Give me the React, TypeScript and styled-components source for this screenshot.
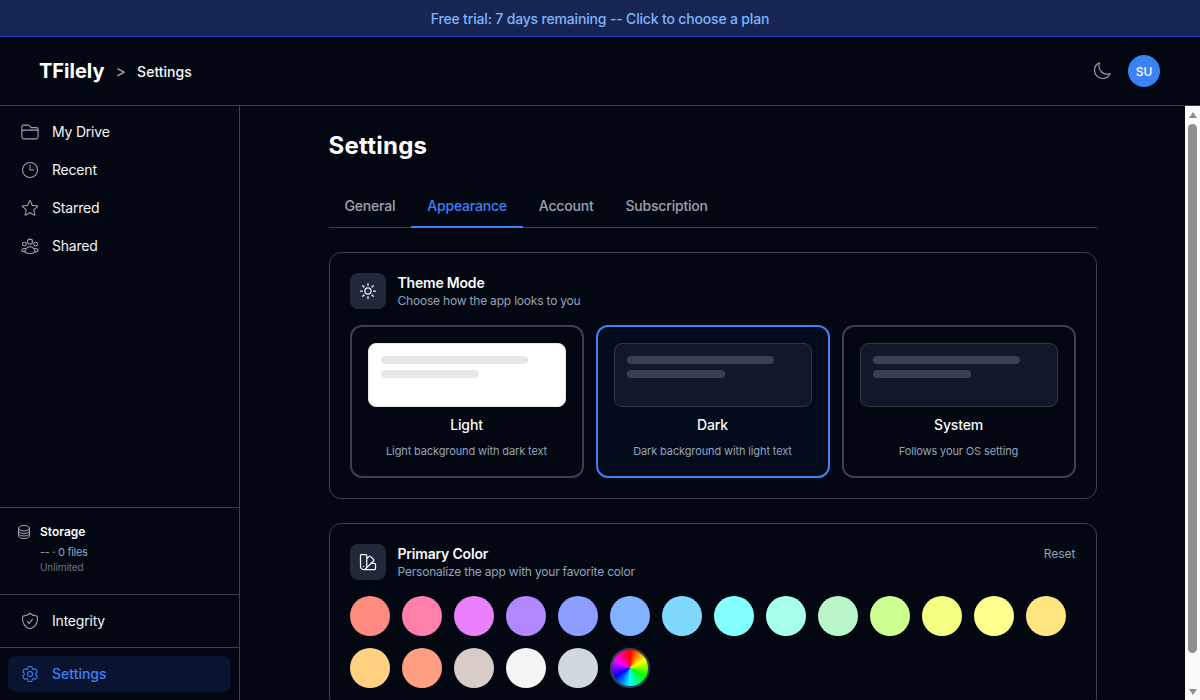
import styled, { createGlobalStyle } from 'styled-components';
import {
  HiOutlineCircleStack,
  HiOutlineClock,
  HiOutlineCog6Tooth,
  HiOutlineFolder,
  HiOutlineMoon,
  HiOutlineShieldCheck,
  HiOutlineStar,
  HiOutlineSun,
  HiOutlineSwatch,
  HiOutlineUserGroup,
} from 'react-icons/hi2';

const GlobalStyle = createGlobalStyle`
  html, body, #root {
    margin: 0;
    height: 100%;
  }
  body {
    background: #030712;
    color: #f9fafb;
    font-family: Inter, "Liberation Sans", sans-serif;
    overflow: hidden;
  }
  * {
    box-sizing: border-box;
  }
`;

const Page = styled.div`
  height: 100vh;
  display: flex;
  flex-direction: column;
`;

const TrialBanner = styled.div`
  height: 37px;
  flex: none;
  display: flex;
  align-items: center;
  justify-content: center;
  background: #172554;
  border-bottom: 1px solid #1e40af;
  color: #7db5fb;
  font-size: 14px;
  font-weight: 500;
  letter-spacing: -0.17px;
`;

const Header = styled.header`
  height: 69px;
  flex: none;
  display: flex;
  align-items: center;
  justify-content: space-between;
  padding: 0 40px;
  border-bottom: 1px solid #374151;
`;

const Breadcrumb = styled.div`
  display: flex;
  align-items: center;
`;

const Logo = styled.span`
  margin-left: -1px;
  font-size: 20px;
  font-weight: 700;
  color: #fff;
`;

const Chevron = styled.span`
  margin: 0 11px 0 11px;
  font-size: 16px;
  color: #9ca3af;
`;

const Crumb = styled.span`
  font-size: 14px;
  font-weight: 500;
  color: #f9fafb;
`;

const HeaderActions = styled.div`
  display: flex;
  align-items: center;
  gap: 16px;
  color: #9ca3af;
`;

const Avatar = styled.div`
  width: 32px;
  height: 32px;
  border-radius: 50%;
  display: flex;
  align-items: center;
  justify-content: center;
  background: #3b82f6;
  color: #fff;
  font-size: 12px;
  font-weight: 500;
`;

const Body = styled.div`
  flex: 1;
  min-height: 0;
  display: flex;
`;

const Sidebar = styled.aside`
  width: 240px;
  flex: none;
  display: flex;
  flex-direction: column;
  border-right: 1px solid #374151;
`;

const NavGroup = styled.nav<{ $grow?: boolean; $divided?: boolean }>`
  display: flex;
  flex-direction: column;
  gap: 2px;
  padding: 8px;
  flex: ${(p) => (p.$grow ? 1 : 'none')};
  border-top: ${(p) => (p.$divided ? '1px solid #374151' : 'none')};
`;

const NavItem = styled.a<{ $active?: boolean }>`
  height: 36px;
  display: flex;
  align-items: center;
  gap: 12px;
  padding: 0 12px;
  border-radius: 8px;
  font-size: 14px;
  font-weight: ${(p) => (p.$active ? 500 : 400)};
  letter-spacing: ${(p) => (p.$active ? '0' : '-0.2px')};
  color: ${(p) => (p.$active ? '#3b82f6' : '#f3f4f6')};
  background: ${(p) => (p.$active ? 'rgba(30, 58, 138, 0.25)' : 'transparent')};

  svg {
    color: ${(p) => (p.$active ? '#3b82f6' : '#9ca3af')};
    flex: none;
  }
`;

const NavLabel = styled.span`
  margin-top: -2px;
`;

const StorageBox = styled.div`
  height: 87px;
  padding: 16px;
  display: flex;
  gap: 8px;
  border-top: 1px solid #374151;
  color: #9ca3af;
`;

const StorageInfo = styled.div`
  display: flex;
  flex-direction: column;
`;

const StorageTitle = styled.span`
  font-size: 12px;
  font-weight: 600;
  line-height: 16px;
  color: #f9fafb;
`;

const StorageUsage = styled.span`
  margin-top: 4px;
  font-size: 11px;
  line-height: 16px;
  letter-spacing: -0.3px;
  color: #94a3b8;
`;

const StorageLimit = styled.span`
  font-size: 10px;
  line-height: 14px;
  letter-spacing: -0.1px;
  color: #6b7280;
`;

const Main = styled.main`
  flex: 1;
  min-width: 0;
  overflow: hidden;
`;

const Content = styled.div`
  width: 768px;
  margin: 0 auto;
  padding: 24px 0 0;
`;

const ScrollTrack = styled.div`
  width: 15px;
  flex: none;
  display: flex;
  flex-direction: column;
  align-items: center;
  background: #fafafa;
`;

const ScrollArrow = styled.div<{ $down?: boolean }>`
  width: 0;
  height: 0;
  border-left: 4.5px solid transparent;
  border-right: 4.5px solid transparent;
  border-${(p) => (p.$down ? 'top' : 'bottom')}: 6px solid #8f8f8f;
  margin: ${(p) => (p.$down ? 'auto 0 5px' : '6px 0 0')};
`;

const ScrollThumb = styled.div`
  width: 9px;
  height: 529px;
  margin-top: 6px;
  border-radius: 5px;
  background: #8f8f8f;
`;

const PageTitle = styled.h1`
  margin: 0 0 23px;
  font-size: 24px;
  line-height: 32px;
  font-weight: 700;
  letter-spacing: 0.25px;
  color: #fff;
`;

const Tabs = styled.div`
  display: flex;
  height: 43px;
  border-bottom: 1px solid #374151;
  margin-bottom: 24px;
`;

const Tab = styled.button<{ $active?: boolean }>`
  height: 43px;
  padding: 0 16px;
  border: 0;
  border-bottom: 2px solid ${(p) => (p.$active ? '#3b82f6' : 'transparent')};
  background: none;
  font-family: inherit;
  font-size: 14px;
  font-weight: 500;
  letter-spacing: -0.2px;
  color: ${(p) => (p.$active ? '#3b82f6' : '#9ca3af')};
`;

const Card = styled.section`
  border: 1px solid #374151;
  border-radius: 12px;
  padding: 20px;
  margin-bottom: 24px;
`;

const CardHeader = styled.div`
  display: flex;
  align-items: flex-start;
  justify-content: space-between;
  margin-bottom: 16px;
`;

const CardHeading = styled.div`
  display: flex;
  align-items: center;
  gap: 12px;
`;

const IconBox = styled.div`
  width: 36px;
  height: 36px;
  border-radius: 8px;
  display: flex;
  align-items: center;
  justify-content: center;
  background: #1f2937;
  color: #f3f4f6;
`;

const CardTitle = styled.div`
  font-size: 14px;
  line-height: 18px;
  font-weight: 600;
  letter-spacing: -0.2px;
  color: #f9fafb;
`;

const CardSubtitle = styled.div`
  margin-top: 1px;
  font-size: 12px;
  line-height: 16px;
  letter-spacing: -0.2px;
  color: #94a3b8;
`;

const ResetButton = styled.span`
  font-size: 12px;
  line-height: 20px;
  color: #94a3b8;
`;

const ThemeGrid = styled.div`
  display: grid;
  grid-template-columns: repeat(3, 1fr);
  gap: 12px;
`;

const ThemeOption = styled.div<{ $selected?: boolean }>`
  height: 153px;
  padding: 16px;
  border: 2px solid ${(p) => (p.$selected ? '#3b82f6' : '#374151')};
  border-radius: 12px;
  background: ${(p) => (p.$selected ? 'rgba(30, 58, 138, 0.08)' : 'transparent')};
  text-align: center;
`;

const Preview = styled.div<{ $light?: boolean }>`
  height: 64px;
  padding: 12px;
  border-radius: 8px;
  border: 1px solid ${(p) => (p.$light ? '#e5e7eb' : '#2d3748')};
  background: ${(p) => (p.$light ? '#fff' : '#111827')};
  display: flex;
  flex-direction: column;
  gap: 6px;
`;

const PreviewBar = styled.div<{ $light?: boolean; $width: number }>`
  height: 8px;
  width: ${(p) => p.$width}px;
  border-radius: 4px;
  background: ${(p) => (p.$light ? '#e5e7eb' : '#374151')};
`;

const OptionName = styled.div`
  margin-top: 8px;
  font-size: 14px;
  line-height: 20px;
  font-weight: 500;
  letter-spacing: -0.15px;
  color: #f9fafb;
`;

const OptionHint = styled.div`
  margin-top: 8px;
  font-size: 11px;
  line-height: 16px;
  letter-spacing: -0.12px;
  color: #94a3b8;
`;

const Swatches = styled.div`
  display: flex;
  flex-wrap: wrap;
  gap: 12px;
`;

const Swatch = styled.div<{ $color: string }>`
  width: 40px;
  height: 40px;
  border-radius: 50%;
  background: ${(p) => p.$color};
`;

const RainbowSwatch = styled.div`
  width: 40px;
  height: 40px;
  border-radius: 50%;
  border: 2px solid #374151;
  background: conic-gradient(red, yellow, lime, aqua, blue, magenta, red);
`;

const themes = [
  { name: 'Light', hint: 'Light background with dark text', light: true },
  { name: 'Dark', hint: 'Dark background with light text', selected: true },
  { name: 'System', hint: 'Follows your OS setting' },
];

const colors = [
  '#ff8a80', '#ff80ab', '#ea80fc', '#b388ff', '#8c9eff', '#82b1ff', '#80d8ff',
  '#84ffff', '#a7ffeb', '#b9f6ca', '#ccff90', '#f4ff81', '#ffff8d', '#ffe57f',
  '#ffd180', '#ff9e80', '#d7ccc8', '#f5f5f5', '#cfd8dc',
];

export default function App() {
  return (
    <Page>
      <GlobalStyle />
      <TrialBanner>Free trial: 7 days remaining -- Click to choose a plan</TrialBanner>
      <Header>
        <Breadcrumb>
          <Logo>TFilely</Logo>
          <Chevron>&gt;</Chevron>
          <Crumb>Settings</Crumb>
        </Breadcrumb>
        <HeaderActions>
          <HiOutlineMoon size={20} strokeWidth={1.3} />
          <Avatar>SU</Avatar>
        </HeaderActions>
      </Header>
      <Body>
        <Sidebar>
          <NavGroup $grow>
            <NavItem><HiOutlineFolder size={20} strokeWidth={1.3} /><NavLabel>My Drive</NavLabel></NavItem>
            <NavItem><HiOutlineClock size={20} strokeWidth={1.3} /><NavLabel>Recent</NavLabel></NavItem>
            <NavItem><HiOutlineStar size={20} strokeWidth={1.3} /><NavLabel>Starred</NavLabel></NavItem>
            <NavItem><HiOutlineUserGroup size={20} strokeWidth={1.3} /><NavLabel>Shared</NavLabel></NavItem>
          </NavGroup>
          <StorageBox>
            <HiOutlineCircleStack size={16} />
            <StorageInfo>
              <StorageTitle>Storage</StorageTitle>
              <StorageUsage>-- · 0 files</StorageUsage>
              <StorageLimit>Unlimited</StorageLimit>
            </StorageInfo>
          </StorageBox>
          <NavGroup $divided>
            <NavItem><HiOutlineShieldCheck size={20} strokeWidth={1.3} /><NavLabel>Integrity</NavLabel></NavItem>
          </NavGroup>
          <NavGroup $divided>
            <NavItem $active><HiOutlineCog6Tooth size={20} strokeWidth={1.3} /><NavLabel>Settings</NavLabel></NavItem>
          </NavGroup>
        </Sidebar>
        <Main>
          <Content>
            <PageTitle>Settings</PageTitle>
            <Tabs>
              <Tab>General</Tab>
              <Tab $active>Appearance</Tab>
              <Tab>Account</Tab>
              <Tab>Subscription</Tab>
            </Tabs>
            <Card>
              <CardHeader>
                <CardHeading>
                  <IconBox><HiOutlineSun size={20} /></IconBox>
                  <div>
                    <CardTitle>Theme Mode</CardTitle>
                    <CardSubtitle>Choose how the app looks to you</CardSubtitle>
                  </div>
                </CardHeading>
              </CardHeader>
              <ThemeGrid>
                {themes.map((t) => (
                  <ThemeOption key={t.name} $selected={t.selected}>
                    <Preview $light={t.light}>
                      <PreviewBar $light={t.light} $width={147} />
                      <PreviewBar $light={t.light} $width={98} />
                    </Preview>
                    <OptionName>{t.name}</OptionName>
                    <OptionHint>{t.hint}</OptionHint>
                  </ThemeOption>
                ))}
              </ThemeGrid>
            </Card>
            <Card>
              <CardHeader>
                <CardHeading>
                  <IconBox><HiOutlineSwatch size={20} /></IconBox>
                  <div>
                    <CardTitle>Primary Color</CardTitle>
                    <CardSubtitle>Personalize the app with your favorite color</CardSubtitle>
                  </div>
                </CardHeading>
                <ResetButton>Reset</ResetButton>
              </CardHeader>
              <Swatches>
                {colors.map((c) => (
                  <Swatch key={c} $color={c} />
                ))}
                <RainbowSwatch />
              </Swatches>
            </Card>
          </Content>
        </Main>
        <ScrollTrack>
          <ScrollArrow />
          <ScrollThumb />
          <ScrollArrow $down />
        </ScrollTrack>
      </Body>
    </Page>
  );
}
